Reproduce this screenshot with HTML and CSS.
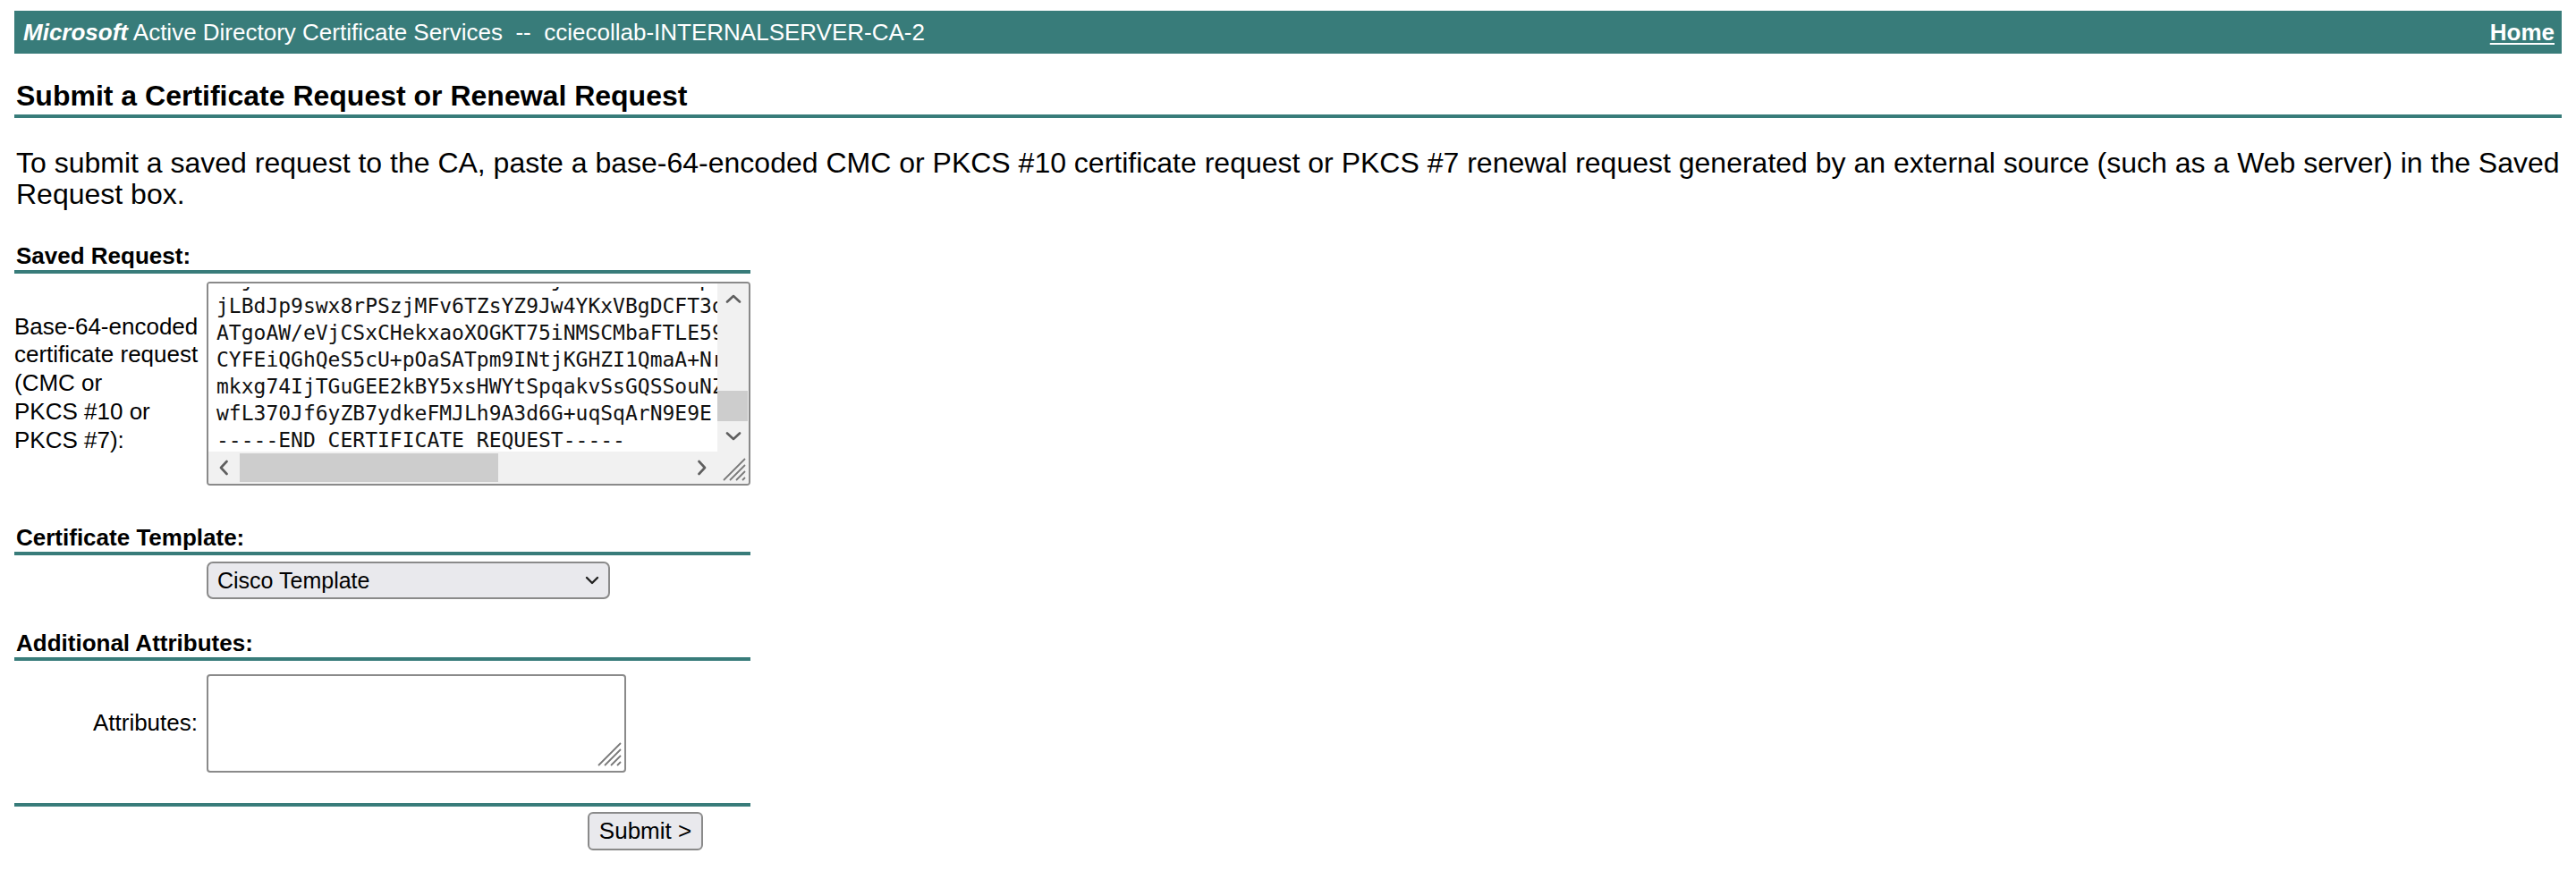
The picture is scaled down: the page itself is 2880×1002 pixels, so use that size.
FILE: index.html
```html
<!DOCTYPE html>
<html>
<head>
<meta charset="utf-8">
<title>Microsoft Active Directory Certificate Services</title>
<link rel="stylesheet" href="styles.css">
</head>
<body>
<div class="topbar">
  <div class="brand"><b>Microsoft</b> Active Directory Certificate Services &nbsp;-- &nbsp;cciecollab-INTERNALSERVER-CA-2</div>
  <a class="home" href="#">Home</a>
</div>
<h1 class="title">Submit a Certificate Request or Renewal Request</h1>
<p class="intro">To submit a saved request to the CA, paste a base-64-encoded CMC or PKCS #10 certificate request or PKCS #7 renewal request generated by an external source (such as a Web server) in the Saved Request box.</p>
<form class="form">
  <div class="sec sec-first">Saved Request:</div>
  <div class="row row-req">
    <div class="lbl">Base-64-encoded<br>certificate request<br>(CMC or<br>PKCS #10 or<br>PKCS #7):</div>
    <div class="reqbox">
      <div class="reqview"><pre class="reqtext">MIjBCzCCATUwDwYDVR0TAEHBAUwjAwEBMA0GCSxpqGSI
jLBdJp9swx8rPSzjMFv6TZsYZ9Jw4YKxVBgDCFT3dKm
ATgoAW/eVjCSxCHekxaoXOGKT75iNMSCMbaFTLE59xR
CYFEiQGhQeS5cU+pOaSATpm9INtjKGHZI1QmaA+NrT4
mkxg74IjTGuGEE2kBY5xsHWYtSpqakvSsGQSSouNZ8w
wfL370Jf6yZB7ydkeFMJLh9A3d6G+uqSqArN9E9E
-----END CERTIFICATE REQUEST-----</pre></div>
      <div class="vbar">
        <div class="sbtn"><svg width="18" height="10" viewBox="0 0 18 10"><path d="M2 8.5 L9 2 L16 8.5" fill="none" stroke="#5f5f5f" stroke-width="2.6" stroke-linecap="round" stroke-linejoin="round"/></svg></div>
        <div class="vtrack"><div class="vthumb"></div></div>
        <div class="sbtn"><svg width="18" height="10" viewBox="0 0 18 10"><path d="M2 1.5 L9 8 L16 1.5" fill="none" stroke="#5f5f5f" stroke-width="2.6" stroke-linecap="round" stroke-linejoin="round"/></svg></div>
      </div>
      <div class="hbar">
        <div class="sbtn hbtn"><svg width="10" height="18" viewBox="0 0 10 18"><path d="M8.5 2 L2 9 L8.5 16" fill="none" stroke="#5f5f5f" stroke-width="2.6" stroke-linecap="round" stroke-linejoin="round"/></svg></div>
        <div class="htrack"><div class="hthumb"></div></div>
        <div class="sbtn hbtn"><svg width="10" height="18" viewBox="0 0 10 18"><path d="M1.5 2 L8 9 L1.5 16" fill="none" stroke="#5f5f5f" stroke-width="2.6" stroke-linecap="round" stroke-linejoin="round"/></svg></div>
      </div>
      <div class="corner"><svg width="30" height="30" viewBox="0 0 30 30"><path d="M28 4 L4 28 M28 11 L11 28 M28 18 L18 28 M28 25 L25 28" stroke="#7a7a7a" stroke-width="1.8" fill="none"/></svg></div>
    </div>
  </div>

  <div class="sec sec-tpl">Certificate Template:</div>
  <div class="row row-tpl">
    <div class="lbl"></div>
    <div class="selwrap">
      <select class="sel"><option>Cisco Template</option></select>
      <svg class="chev" width="16" height="10" viewBox="0 0 16 10"><path d="M2 2 L8 8 L14 2" fill="none" stroke="#222" stroke-width="2.4" stroke-linecap="round" stroke-linejoin="round"/></svg>
    </div>
  </div>

  <div class="sec sec-attr">Additional Attributes:</div>
  <div class="row row-attr">
    <div class="lbl lbl-right">Attributes:</div>
    <div class="attrwrap">
      <textarea class="attr"></textarea>
      <svg class="grip" width="30" height="30" viewBox="0 0 30 30"><path d="M28 3 L3 28 M28 10 L10 28 M28 17 L17 28 M28 24 L24 28" stroke="#7a7a7a" stroke-width="1.8" fill="none"/></svg>
    </div>
  </div>

  <div class="rule"></div>
  <div class="row row-submit">
    <button type="button" class="submit">Submit &gt;</button>
  </div>
</form>
</body>
</html>
```

FILE: styles.css
```css
* { box-sizing: border-box; }
html, body { margin: 0; padding: 0; background: #ffffff; }
body {
  padding: 12px 16px 0 16px;
  font-family: "Liberation Sans", Arial, sans-serif;
  color: #000000;
}

.topbar {
  height: 48px;
  background: #387c7a;
  display: flex;
  align-items: center;
  justify-content: space-between;
  padding: 0 8px 0 10px;
  color: #ffffff;
  font-size: 26px;
}
.brand { white-space: nowrap; }
.brand b { font-style: italic; font-weight: bold; }
.home {
  color: #ffffff;
  font-weight: bold;
  text-decoration: underline;
  text-underline-offset: 3px;
  text-decoration-thickness: 2px;
}

.title {
  margin: 29px 0 0 0;
  padding: 0 0 2px 2px;
  font-size: 32px;
  line-height: 37px;
  font-weight: bold;
  border-bottom: 4px solid #387c7a;
}

.intro {
  margin: 33px 0 0 0;
  padding-left: 2px;
  font-size: 32px;
  line-height: 35px;
}

.form { width: 823px; margin-top: 36px; }

.sec {
  font-size: 26px;
  font-weight: bold;
  line-height: 30px;
  padding: 0 0 1px 2px;
  border-bottom: 4px solid #387c7a;
}
.sec-tpl { margin-top: 43px; }
.sec-attr { margin-top: 34px; }

.row { display: flex; align-items: center; }
.row-req { margin-top: 9px; }
.row-tpl { margin-top: 7px; }
.row-attr { margin-top: 15px; }

.lbl {
  width: 215px;
  flex: none;
  font-size: 26px;
  line-height: 31.7px;
  padding-right: 2px;
  white-space: nowrap;
}
.lbl-right { text-align: right; padding-right: 10px; }

/* saved request box */
.reqbox {
  width: 608px;
  height: 228px;
  border: 2px solid #8a8a8a;
  border-radius: 4px;
  overflow: hidden;
  display: grid;
  grid-template-columns: 1fr 35px;
  grid-template-rows: 1fr 36px;
  background: #ffffff;
}
.reqview {
  overflow: hidden;
  background: #ffffff;
  border-top: 4px solid #ffffff;
}
.reqtext {
  margin: -24px 0 0 0;
  padding: 0 0 0 9px;
  font-family: "DejaVu Sans Mono", "Liberation Mono", monospace;
  font-size: 23px;
  line-height: 30px;
  color: #111111;
  white-space: pre;
}
.vbar {
  background: #f1f1f1;
  display: flex;
  flex-direction: column;
}
.sbtn {
  height: 34px;
  flex: none;
  display: flex;
  align-items: center;
  justify-content: center;
}
.vtrack { flex: 1; display: flex; flex-direction: column; justify-content: flex-end; padding: 0 1px 0 0; }
.vthumb { height: 34px; background: #cdcdcd; }
.hbar {
  background: #f1f1f1;
  display: flex;
  align-items: stretch;
}
.hbtn { width: 34px; height: auto; }
.htrack { flex: 1; padding: 2px 0; }
.hthumb { width: 289px; height: 100%; margin-left: 1px; background: #cdcdcd; }
.corner {
  background: #f1f1f1;
  display: flex;
  align-items: flex-end;
  justify-content: flex-end;
  padding: 0 2px 2px 0;
}

/* template select */
.selwrap { position: relative; width: 451px; height: 42px; }
.sel {
  appearance: none;
  -webkit-appearance: none;
  width: 100%;
  height: 100%;
  border: 2px solid #8a8a8a;
  border-radius: 7px;
  background: #e9e9ed;
  font-family: "Liberation Sans", Arial, sans-serif;
  font-size: 25px;
  color: #000000;
  padding: 0 0 0 10px;
  margin: 0;
}
.chev { position: absolute; right: 12px; top: 16px; }

/* attributes */
.attrwrap { position: relative; width: 469px; height: 110px; }
.attr {
  display: block;
  width: 100%;
  height: 100%;
  border: 2px solid #8a8a8a;
  border-radius: 4px;
  resize: none;
  margin: 0;
  background: #ffffff;
}
.grip { position: absolute; right: 4px; bottom: 6px; }

.rule { margin-top: 34px; border-top: 4px solid #387c7a; }
.row-submit { margin-top: 6px; justify-content: flex-end; padding-right: 53px; }
.submit {
  width: 129px;
  height: 43px;
  border: 2px solid #8a8a8a;
  border-radius: 6px;
  background: #e9e9ed;
  font-family: "Liberation Sans", Arial, sans-serif;
  font-size: 26px;
  color: #000000;
  padding: 0;
  margin: 0;
}
```
